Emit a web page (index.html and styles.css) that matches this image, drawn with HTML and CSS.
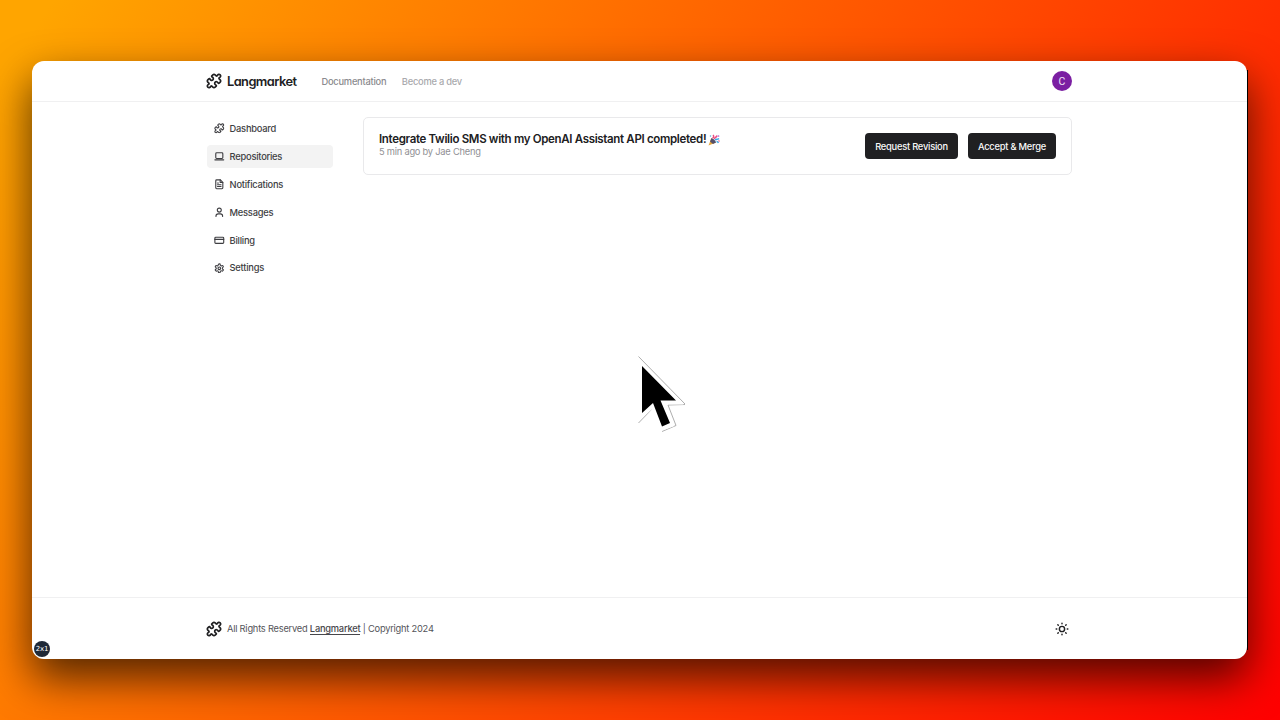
FILE: index.html
```html
<!DOCTYPE html>
<html lang="en">
<head>
<meta charset="utf-8">
<title>Langmarket</title>
<link rel="stylesheet" href="styles.css">
</head>
<body>
<svg class="defs" width="0" height="0" aria-hidden="true">
  <symbol id="puzzle" viewBox="0 0 24 24"><path d="M19.439 7.85c-.049.322.059.648.289.878l1.568 1.568c.47.47.706 1.087.706 1.704s-.235 1.233-.706 1.704l-1.611 1.611a.98.98 0 0 1-.837.276c-.47-.07-.802-.48-.968-.925a2.501 2.501 0 1 0-3.214 3.214c.446.166.855.497.925.968a.979.979 0 0 1-.276.837l-1.61 1.61a2.404 2.404 0 0 1-1.705.707 2.402 2.402 0 0 1-1.704-.706l-1.568-1.568a1.026 1.026 0 0 0-.877-.29c-.493.074-.84.504-1.02.968a2.5 2.5 0 1 1-3.237-3.237c.464-.18.894-.527.967-1.02a1.026 1.026 0 0 0-.289-.877l-1.568-1.568A2.402 2.402 0 0 1 1.998 12c0-.617.236-1.234.706-1.704L4.23 8.77c.24-.24.581-.353.917-.303.515.077.877.528 1.073 1.01a2.5 2.5 0 1 0 3.259-3.259c-.482-.196-.933-.558-1.01-1.073-.05-.336.062-.676.303-.917l1.525-1.525A2.402 2.402 0 0 1 12 1.998c.617 0 1.234.236 1.704.706l1.568 1.568c.23.23.556.338.877.29.493-.074.84-.504 1.02-.968a2.5 2.5 0 1 1 3.237 3.237c-.464.18-.894.527-.967 1.02Z"/></symbol>
</svg>
<div class="window">
  <header class="topbar">
    <div class="container">
      <a class="brand"><svg class="icon logo"><use href="#puzzle"/></svg><span>Langmarket</span></a>
      <nav class="links"><a>Documentation</a><a class="muted">Become a dev</a></nav>
      <div class="avatar">C</div>
    </div>
  </header>
  <main class="main container">
    <nav class="sidebar">
      <a class="item"><svg class="icon"><use href="#puzzle"/></svg><span>Dashboard</span></a>
      <a class="item active"><svg class="icon" viewBox="0 0 24 24"><rect x="4" y="4" width="16" height="13" rx="2"/><path d="M2 20h20"/></svg><span>Repositories</span></a>
      <a class="item"><svg class="icon" viewBox="0 0 24 24"><path d="M14.5 2H6a2 2 0 0 0-2 2v16a2 2 0 0 0 2 2h12a2 2 0 0 0 2-2V7.500L14.500 2z"/><path d="M14 2v6h6M16 13H8M16 17H8M10 9H8"/></svg><span>Notifications</span></a>
      <a class="item"><svg class="icon" viewBox="0 0 24 24"><circle cx="12" cy="7" r="4.500"/><path d="M19.500 21.500v-1a5 5 0 0 0-5-5h-5a5 5 0 0 0-5 5v1"/></svg><span>Messages</span></a>
      <a class="item"><svg class="icon" viewBox="0 0 24 24"><rect x="2" y="5" width="20" height="14" rx="2"/><path d="M2 10h20"/></svg><span>Billing</span></a>
      <a class="item"><svg class="icon" viewBox="0 0 24 24"><path d="M12.220 2h-.44a2 2 0 0 0-2 2v.18a2 2 0 0 1-1 1.730l-.43.250a2 2 0 0 1-2 0l-.15-.08a2 2 0 0 0-2.730.730l-.22.380a2 2 0 0 0 .730 2.730l.15.100a2 2 0 0 1 1 1.720v.510a2 2 0 0 1-1 1.740l-.15.090a2 2 0 0 0-.730 2.730l.22.380a2 2 0 0 0 2.730.730l.15-.08a2 2 0 0 1 2 0l.43.250a2 2 0 0 1 1 1.730V20a2 2 0 0 0 2 2h.44a2 2 0 0 0 2-2v-.18a2 2 0 0 1 1-1.730l.43-.250a2 2 0 0 1 2 0l.15.080a2 2 0 0 0 2.730-.730l.22-.390a2 2 0 0 0-.730-2.730l-.15-.080a2 2 0 0 1-1-1.740v-.500a2 2 0 0 1 1-1.740l.15-.090a2 2 0 0 0 .730-2.730l-.22-.380a2 2 0 0 0-2.730-.730l-.15.080a2 2 0 0 1-2 0l-.43-.250a2 2 0 0 1-1-1.730V4a2 2 0 0 0-2-2z"/><circle cx="12" cy="12" r="3"/></svg><span>Settings</span></a>
    </nav>
    <section class="card">
      <div class="info">
        <h1><span>Integrate Twilio SMS with my OpenAI Assistant API completed!</span><svg class="party" viewBox="0 0 24 24"><path fill="#e5a63b" d="M7 8 1 23l15-6z"/><path fill="#55506b" d="M7 8 4 15l6 5 6-3C15 13 11 9 7 8z"/><path fill="none" stroke="#ec4d82" stroke-width="3" d="M9 8c3-1 3-4 1-6M13 10c0-4 4-2 5-7"/><path fill="none" stroke="#39a9e8" stroke-width="3" d="M14 12c3-3 5 0 8-3M17 15c2 0 3 1 4 3"/><circle cx="21" cy="4" r="1.700" fill="#b266d9"/><circle cx="5" cy="4" r="1.500" fill="#51b6e4"/><circle cx="22" cy="14" r="1.500" fill="#ec4d82"/></svg></h1>
        <p>5 min ago by Jae Cheng</p>
      </div>
      <div class="actions"><button class="revise">Request Revision</button><button class="merge">Accept &amp; Merge</button></div>
    </section>
  </main>
  <footer class="footer">
    <div class="container">
      <svg class="icon logo"><use href="#puzzle"/></svg>
      <p class="legal">All Rights Reserved <a>Langmarket</a> | Copyright 2024</p>
      <svg class="icon sun" viewBox="0 0 24 24"><circle cx="12" cy="12" r="4.500"/><path d="M12 2v1M12 21V22M2 12h1M21 12H22M4.900 4.900l.7.7M18.400 18.400l.7.7M4.900 19.100l.7-.7M18.400 5.600l.7-.7"/></svg>
    </div>
  </footer>
  <span class="badge">2x1</span>
  <svg class="cursor" viewBox="0 0 52 80"><path class="edge" d="M3.500 2.500 50 50M50 50.500 33 51 41 71.500 27 77.500M17.500 54.500 3.500 69"/><path class="halo" d="M7 12 41.500 47.500H26L35 70.500 27 73.500 18 50.500 7 60z"/><path d="M7 12 41 46.500H25.500L35 69 27 72.500 18 49 7 59z"/></svg>
</div>
</body>
</html>
```
FILE: styles.css
```css
* { box-sizing: border-box; }
body {
  margin: 0;
  width: 1280px;
  height: 720px;
  overflow: hidden;
  padding: 61px 33px 61px 32px;
  background: linear-gradient(125deg, #ffa500 3%, #ff0000);
  font-family: Inter, sans-serif;
  font-size: 9.3px;
  letter-spacing: -.23px;
  color: #202022;
}
h1, p { margin: 0; }
.defs { position: absolute; }
.window {
  position: relative;
  display: flex;
  flex-direction: column;
  height: 598px;
  background: #fff;
  border-radius: 12px;
  box-shadow: 0 19px 44px rgba(0, 0, 0, .68);
}
.window::after {
  content: "";
  position: absolute;
  top: 9px;
  bottom: 9px;
  right: -1px;
  width: 1px;
  background: #000;
}
.container { width: 865px; margin-left: 175px; display: flex; }
.topbar { height: 41px; border-bottom: 1px solid #f0f0f1; }
.topbar .container { height: 40px; align-items: center; }
.brand { display: flex; align-items: center; width: 114.5px; font-size: 12.8px; font-weight: 600; letter-spacing: -.55px; font-feature-settings: "cv11"; }
.icon { flex: none; width: 10.6px; height: 10.6px; fill: none; stroke: currentColor; stroke-width: 2.5; stroke-linecap: round; stroke-linejoin: round; }
.logo { width: 16px; height: 16px; margin: 0 4.8px 0 -.8px; }
.links { display: flex; gap: 15.5px; font-weight: 500; color: #8a8a8e; }
.links .muted { color: #a9a9ad; }
.avatar { display: grid; place-items: center; width: 20px; height: 20px; margin-left: auto; border-radius: 50%; background: #7b1fa2; color: #f0e2f5; font: 10.5px Roboto, sans-serif; letter-spacing: 0; }
.main { flex: 1; gap: 30px; align-items: flex-start; padding-top: 15px; }
.sidebar { display: flex; flex-direction: column; gap: 5px; width: 126px; }
.item { display: flex; align-items: center; gap: 5px; height: 22.9px; padding-left: 7px; border-radius: 4px; font-weight: 500; color: #3e3e42; }
.active { background: #f3f3f3; }
.card { display: flex; justify-content: space-between; flex: 1; height: 58px; padding: 15px; border: 1px solid #e9e9eb; border-radius: 5px; }
h1 { display: flex; align-items: center; gap: 2px; font-size: 11.5px; font-weight: 600; letter-spacing: -.33px; line-height: 13px; white-space: nowrap; }
.party { width: 12px; height: 12px; }
.info p { font-size: 9.3px; line-height: 12px; color: #909094; }
.actions { display: flex; gap: 10px; }
button { height: 26px; padding: 0; border: 0; border-radius: 4px; background: #202022; color: #fafafa; font: 500 9.3px Inter, sans-serif; letter-spacing: -.22px; }
.revise { width: 93px; }
.merge { width: 88px; }
.footer { height: 62px; border-top: 1px solid #f0f0f1; }
.footer .container { height: 61px; align-items: center; }
.legal { color: #55555a; }
.legal a { font-weight: 500; color: #47474b; border-bottom: 1px solid #47474b; }
.sun { width: 14px; height: 14px; margin: 0 3px 0 auto; }
.badge { position: absolute; left: 2px; bottom: 2px; display: grid; place-items: center; width: 16px; height: 16px; border-radius: 50%; background: #1f2937; color: #fff; font: 7px "DejaVu Sans", sans-serif; letter-spacing: -.2px; }
.cursor { position: absolute; left: 603px; top: 293px; width: 52px; height: 80px; }
.cursor .halo { stroke: #fff; stroke-width: 6; }
.cursor .edge { fill: none; stroke: #999; stroke-width: .8; }
```
